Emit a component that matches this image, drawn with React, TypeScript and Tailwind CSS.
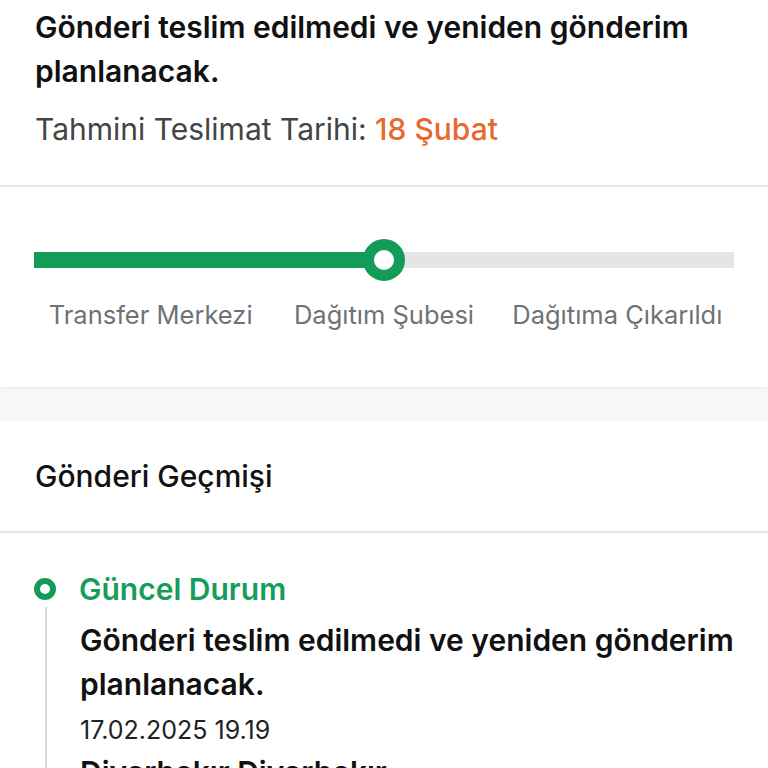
const font = { fontFamily: 'Inter, "Noto Sans", sans-serif' }

const steps = ['Transfer Merkezi', 'Dağıtım Şubesi', 'Dağıtıma Çıkarıldı']

function ProgressTrack() {
  return (
    <div className="px-[34px] pt-[52px] pb-[57px]">
      <div className="relative h-[42px] flex items-center">
        <div className="h-4 w-full bg-[#e4e5e7] flex">
          <div className="h-full w-1/2 bg-[#139b57]" />
        </div>
        <span className="absolute left-1/2 top-0 -translate-x-1/2 h-[42px] w-[42px] rounded-full border-[11px] border-[#139b57] bg-white" />
      </div>
      <div className="grid grid-cols-3 mt-[19px]">
        {steps.map((s) => (
          <span key={s} className="text-center whitespace-nowrap text-[25.5px] leading-[30px] text-[#6f7276]">{s}</span>
        ))}
      </div>
    </div>
  )
}

export default function App() {
  return (
    <div className="min-h-[768px] bg-[#f8f8f8] text-black" style={font}>
      <section className="bg-white shadow-[0_2px_6px_rgba(0,0,0,0.06)]">
        <div className="px-[35px] pt-[5px] pb-[38px] border-b-2 border-[#e6e6e6]">
          <h1 className="text-[30px] leading-[44px] font-semibold text-[#111]">
            Gönderi teslim edilmedi ve yeniden gönderim planlanacak.
          </h1>
          <p className="mt-[18px] text-[30px] leading-[36px] text-[#444]">
            Tahmini Teslimat Tarihi: <span className="font-medium text-[#e8692f]">18 Şubat</span>
          </p>
        </div>
        <ProgressTrack />
      </section>

      <section className="mt-[34px] bg-white">
        <div className="h-[112px] px-[35px] flex items-center border-b-2 border-[#e6e6e6]">
          <h2 className="text-[30px] font-medium text-[#111]">Gönderi Geçmişi</h2>
        </div>
        <div className="px-[34px] pt-[38px] pb-10">
          <div className="flex items-center gap-[23px] h-[36px]">
            <span className="h-[22px] w-[22px] rounded-full border-[6px] border-[#139b57] bg-white" />
            <span className="text-[30px] font-semibold text-[#179d5b]">Güncel Durum</span>
          </div>
          <div className="ml-[11px] border-l-2 border-[#d9d9d9] pl-[33px] pt-[11px]">
            <p className="text-[30px] leading-[44px] font-semibold text-[#111]">
              Gönderi teslim edilmedi ve yeniden gönderim planlanacak.
            </p>
            <p className="mt-[4px] text-[25px] leading-[40px] text-[#222]">17.02.2025 19.19</p>
            <p className="mt-[2px] text-[30px] leading-[40px] font-semibold text-[#111]">Diyarbakır Diyarbakır</p>
          </div>
        </div>
      </section>
    </div>
  )
}
